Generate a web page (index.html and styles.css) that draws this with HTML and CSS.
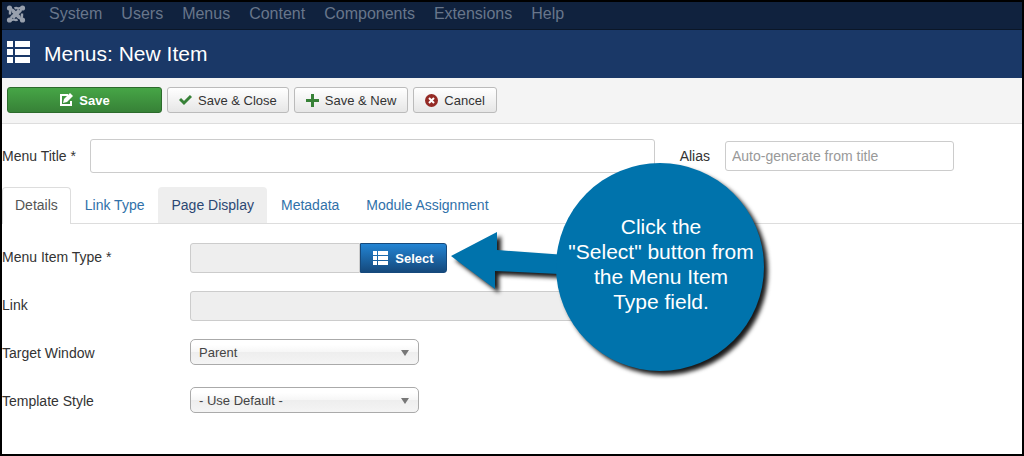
FILE: index.html
```html
<!DOCTYPE html>
<html lang="en">
<head>
    <meta charset="UTF-8">
    <meta name="viewport" content="width=device-width, initial-scale=1.0">
    <title>Menus: New Item</title>
    <link rel="stylesheet" href="styles.css">
</head>
<body>
    <nav class="navbar">
        <a href="#" class="brand" aria-label="Home">
            <svg width="20" height="18" viewBox="0 0 20 18" fill="none" stroke="#98a0ad" stroke-width="2.4">
                <path d="M4 9.500V7Q4 3 7.500 5.500L14 12M8.500 3.500Q10 2.500 12 3.500Q16 2 14.500 6L7 13M16 8.500V11Q16 15 12.500 12.500L6 6M11.500 14.500Q10 15.500 8 14.500Q4 16 5.500 12L13 5"/>
                <g fill="#98a0ad" stroke="none">
                    <circle cx="3.500" cy="3" r="2.600"/>
                    <circle cx="16.500" cy="3" r="2.600"/>
                    <circle cx="3.500" cy="15" r="2.600"/>
                    <circle cx="16.500" cy="15" r="2.600"/>
                </g>
            </svg>
        </a>
        <a href="#">System</a>
        <a href="#">Users</a>
        <a href="#">Menus</a>
        <a href="#">Content</a>
        <a href="#">Components</a>
        <a href="#">Extensions</a>
        <a href="#">Help</a>
    </nav>

    <header class="header">
        <svg width="23" height="22" viewBox="0 0 23 22" fill="#fff">
            <path d="M0 0h6v6H0zM8 0h15v6H8zM0 8h6v6H0zM8 8h15v6H8zM0 16h6v6H0zM8 16h15v6H8z"/>
        </svg>
        <h1>Menus: New Item</h1>
    </header>

    <div class="toolbar">
        <button type="button" class="btn btn-success">
            <svg width="14" height="14" viewBox="0 0 14 14" fill="none" stroke="#fff">
                <path d="M9 2H2v10h10V8" stroke-width="2"/>
                <path d="M4 10l1-4 6-6 3 3-6 6z" fill="#fff" stroke="none"/>
            </svg>
            Save
        </button>
        <button type="button" class="btn">
            <svg width="13" height="12" viewBox="0 0 13 12" fill="none" stroke="#378137" stroke-width="3">
                <path d="M1 5l4 4 7-7"/>
            </svg>
            Save &amp; Close
        </button>
        <button type="button" class="btn">
            <svg width="13" height="13" viewBox="0 0 13 13" fill="none" stroke="#378137" stroke-width="3">
                <path d="M6.500 0v13M0 6.500h13"/>
            </svg>
            Save &amp; New
        </button>
        <button type="button" class="btn">
            <svg width="13" height="13" viewBox="0 0 13 13">
                <circle cx="6.500" cy="6.500" r="6.500" fill="#942a25"/>
                <path d="M4 4l5 5M9 4l-5 5" stroke="#fff" stroke-width="2"/>
            </svg>
            Cancel
        </button>
    </div>

    <form class="item-form">
        <div class="title-row">
            <label for="title">Menu Title *</label>
            <input type="text" id="title" class="title-input">
            <label for="alias">Alias</label>
            <input type="text" id="alias" class="alias-input" placeholder="Auto-generate from title">
        </div>

        <div class="tabs">
            <a href="#" class="active">Details</a>
            <a href="#">Link Type</a>
            <a href="#" class="hover">Page Display</a>
            <a href="#">Metadata</a>
            <a href="#">Module Assignment</a>
        </div>

        <div class="fields">
            <div class="row">
                <label for="type">Menu Item Type *</label>
                <div class="input-append">
                    <input type="text" id="type" readonly>
                    <button type="button" class="btn-primary">
                        <svg width="15" height="14" viewBox="0 0 15 14" fill="#fff">
                            <path d="M0 0h4v4H0zM5 0h10v4H5zM0 5h4v4H0zM5 5h10v4H5zM0 10h4v4H0zM5 10h10v4H5z"/>
                        </svg>
                        Select
                    </button>
                </div>
            </div>
            <div class="row">
                <label for="link">Link</label>
                <input type="text" id="link" class="link-input" readonly>
            </div>
            <div class="row">
                <label for="target">Target Window</label>
                <div class="select">
                    <select id="target"><option>Parent</option></select>
                </div>
            </div>
            <div class="row">
                <label for="template">Template Style</label>
                <div class="select">
                    <select id="template"><option>- Use Default -</option></select>
                </div>
            </div>
        </div>
    </form>

    <div class="callout">
        <svg width="330" height="230" viewBox="0 0 330 230" fill="#0073ac">
            <path d="M1 97L47 73V91L130 97V116L45 112V130z"/>
            <circle cx="210" cy="108" r="104"/>
        </svg>
        <p>Click the<br>"Select" button from<br>the Menu Item<br>Type field.</p>
    </div>
</body>
</html>
```
FILE: styles.css
```css
* {
    box-sizing: border-box;
}
body {
    position: relative;
    margin: 0;
    min-height: 100vh;
    border: 2px solid #000;
    background: #fff;
    color: #333;
    font-family: "Liberation Sans", Arial, sans-serif;
    font-size: 14px;
}
input, select, button {
    font-family: inherit;
    font-size: 14px;
    color: #444;
}
a {
    text-decoration: none;
}

/* top bars */
.navbar {
    display: flex;
    align-items: center;
    gap: 19px;
    height: 28px;
    padding: 0 4px 4px;
    background: #10223e;
    border-bottom: 1px solid #0b1728;
}
.navbar a {
    color: #68768b;
    font-size: 16px;
}
.navbar .brand {
    display: flex;
    margin-right: 4px;
}
.header {
    display: flex;
    align-items: center;
    gap: 14px;
    height: 48px;
    padding: 0 5px;
    background: #1a3867;
    color: #fff;
}
.header svg {
    margin-bottom: 4px;
}
.header h1 {
    margin: 0;
    font-size: 21px;
    font-weight: normal;
}

/* toolbar */
.toolbar {
    display: flex;
    gap: 5px;
    padding: 9px 5px 10px;
    background: #f4f4f4;
    border-bottom: 1px solid #ddd;
}
.btn {
    display: flex;
    align-items: center;
    justify-content: center;
    gap: 6px;
    height: 26px;
    padding: 0 11px;
    border: 1px solid #bbb;
    border-radius: 3px;
    background: linear-gradient(#fff, #e6e6e6);
    color: #333;
    font-size: 13px;
}
.btn-success {
    width: 155px;
    border-color: #2c6b2c;
    background: linear-gradient(#46a546, #378137);
    color: #fff;
    font-weight: bold;
}

/* form */
.title-row {
    display: flex;
    align-items: center;
    padding: 15px 68px 14px 0;
}
.title-row input {
    padding: 0 6px;
    border: 1px solid #ccc;
    border-radius: 3px;
}
.title-input {
    flex: 1;
    height: 34px;
    margin: 0 25px 0 14px;
}
.alias-input {
    width: 229px;
    height: 30px;
    margin-left: 15px;
}
input::placeholder {
    color: #999;
}
.tabs {
    display: flex;
    gap: 1px;
    border-bottom: 1px solid #ddd;
}
.tabs a {
    height: 36px;
    padding: 0 12px;
    border: 1px solid transparent;
    border-bottom: 0;
    border-radius: 4px 4px 0 0;
    color: #3071a9;
    line-height: 34px;
}
.tabs .active {
    margin-bottom: -1px;
    height: 37px;
    border-color: #ddd;
    background: #fff;
    color: #555;
}
.tabs .hover {
    background: #eee;
    color: #2b4773;
}
.fields {
    padding-top: 19px;
}
.row {
    display: flex;
    height: 30px;
    margin-bottom: 18px;
}
.row label {
    width: 188px;
    line-height: 28px;
}
.row input {
    height: 30px;
    border: 1px solid #ccc;
    border-radius: 3px;
    background: #eee;
}
.input-append {
    display: flex;
}
.input-append input {
    width: 170px;
    border-radius: 3px 0 0 3px;
}
.btn-primary {
    display: flex;
    align-items: center;
    justify-content: center;
    gap: 7px;
    width: 87px;
    height: 30px;
    padding: 0;
    border: 1px solid #15497c;
    border-radius: 0 3px 3px 0;
    background: linear-gradient(#2384d3, #15497c);
    color: #fff;
    font-size: 13px;
    font-weight: bold;
}
.link-input {
    width: 400px;
}
.select {
    position: relative;
    width: 229px;
}
.select select {
    appearance: none;
    width: 100%;
    height: 26px;
    padding: 0 8px;
    border: 1px solid #aaa;
    border-radius: 5px;
    background: linear-gradient(#fff 20%, #f6f6f6 50%, #eee 52%, #f4f4f4);
    color: #444;
    font-size: 13px;
}
.select::after {
    content: "";
    position: absolute;
    top: 11px;
    right: 10px;
    border: 4px solid transparent;
    border-top: 6px solid #777;
    border-bottom: 0;
    pointer-events: none;
}

/* help bubble over the form */
.callout {
    position: absolute;
    left: 448px;
    top: 157px;
}
.callout svg {
    display: block;
    filter: drop-shadow(4px 4px 2px rgba(0, 0, 0, 0.9));
}
.callout p {
    position: absolute;
    left: 107px;
    top: 55px;
    width: 208px;
    margin: 0;
    color: #fff;
    font-size: 21px;
    line-height: 25px;
    text-align: center;
}
```
